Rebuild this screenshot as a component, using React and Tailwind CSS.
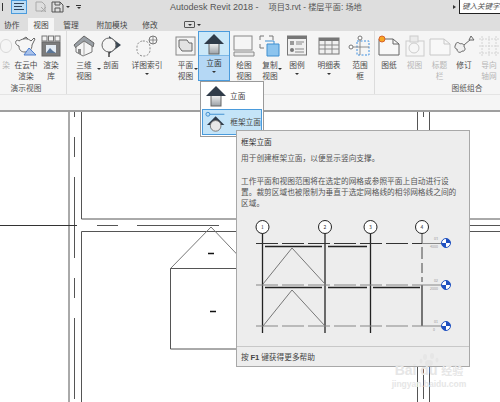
const font = { fontFamily: '"Noto Sans CJK SC", "Liberation Sans", sans-serif' };
const titleFont = { fontFamily: '"Liberation Sans", "Noto Sans CJK SC", sans-serif' };

function Teapot() {
  return (
    <svg width="24" height="22" viewBox="0 0 24 22">
      <path d="M5 6 C9 3 14 3 17 6 L20 3 L21 4 L18 10 C18 15 15 17 11 17 C7 17 5 15 5 11 C2 10 1 8 2 6 C3 5 4 5 5 6Z" fill="#f6f6f6" stroke="#666" strokeWidth="1" />
      <path d="M9 4 L12 2 L14 4" fill="none" stroke="#666" />
      <path d="M15 13 L22 20 L10 20Z" fill="#a9c2ea" stroke="#4f7fcc" />
    </svg>
  );
}

function RenderGallery() {
  return (
    <svg width="20" height="22" viewBox="0 0 20 22">
      <rect x="1" y="1" width="5" height="5" fill="#f2f2f2" stroke="#777" />
      <rect x="7.5" y="1" width="5" height="5" fill="#f2f2f2" stroke="#777" />
      <rect x="14" y="1" width="5" height="5" fill="#f2f2f2" stroke="#777" />
      <rect x="1" y="7" width="18" height="14" fill="#7c7c7c" stroke="#666" />
      <rect x="5" y="10" width="10" height="8" fill="#e4ecf4" />
      <path d="M5 18 L9 13 L12 16 L15 18Z" fill="#5a7596" />
    </svg>
  );
}

function House() {
  return (
    <svg width="22" height="22" viewBox="0 0 22 22">
      <path d="M1 10 L11 1 L21 8 L20 12 L11 6 L3 13Z" fill="#9aa0a6" stroke="#666" />
      <path d="M3 12 L11 6 L19 11 V17 L10 21 L3 17Z" fill="#f5f5f5" stroke="#777" />
      <path d="M11 7 V21" stroke="#aaa" />
      <rect x="5" y="14" width="3" height="5" fill="#888" />
    </svg>
  );
}

function Section() {
  return (
    <svg width="22" height="22" viewBox="0 0 22 22">
      <path d="M9 1 L21 10 L9 19Z" fill="#3a4652" />
      <circle cx="9" cy="10" r="7" fill="#f4f4f4" stroke="#666" />
      <path d="M9 17 V22" stroke="#444" strokeWidth="1.5" />
    </svg>
  );
}

function Callout() {
  return (
    <svg width="24" height="22" viewBox="0 0 24 22">
      <rect x="2" y="6" width="13" height="15" rx="6" fill="none" stroke="#888" strokeDasharray="2 1.5" />
      <circle cx="18" cy="5" r="4" fill="#f4f4f4" stroke="#777" />
      <path d="M14 5 H22 M18 1 V9" stroke="#777" strokeWidth="0.8" />
    </svg>
  );
}

function Plan() {
  return (
    <svg width="22" height="22" viewBox="0 0 22 22">
      <rect x="1" y="2" width="19" height="18" fill="#f4f4f4" stroke="#888" />
      <path d="M4 5 H12 L14 8 H17 V16 H7 L4 12Z" fill="#e2e2e2" stroke="#666" />
    </svg>
  );
}

function ElevationArrow({ size = 22 }) {
  return (
    <svg width={size} height={size} viewBox="0 0 22 22">
      <defs>
        <linearGradient id="elevBody" x1="0" y1="0" x2="0" y2="1">
          <stop offset="0" stopColor="#f4f4f4" />
          <stop offset="1" stopColor="#9aa0a6" />
        </linearGradient>
      </defs>
      <rect x="6" y="10" width="10" height="11" fill="url(#elevBody)" stroke="#666" />
      <path d="M11 1 L21 11 H1Z" fill="#2f3b49" />
    </svg>
  );
}

function FrameElevation() {
  return (
    <svg width="24" height="22" viewBox="0 0 24 22">
      <circle cx="3" cy="3" r="2" fill="#bfe0f5" stroke="#3f8fd0" />
      <path d="M5 3 H20" stroke="#3f8fd0" />
      <path d="M11 5 L20 14 H2Z" fill="#2f3b49" />
      <circle cx="11" cy="15" r="5.5" fill="#e8e8e8" stroke="#777" />
    </svg>
  );
}

function Sheet({ dim, dot }) {
  const c = dim ? '#c8c8c8' : '#666';
  return (
    <svg width="22" height="22" viewBox="0 0 22 22">
      <path d="M1 4 H15 L21 9 V20 H1Z" fill="#f8f8f8" stroke={c} />
      <path d="M15 4 V9 H21" fill="none" stroke={c} />
      {dot && <circle cx="4" cy="4" r="3" fill="#f5a623" stroke="#d9622b" />}
    </svg>
  );
}

function Duplicate() {
  return (
    <svg width="22" height="22" viewBox="0 0 22 22">
      <path d="M1 5 V1 H5 M10 1 H14 V5 M1 9 V13 H5" fill="none" stroke="#777" />
      <path d="M8 9 H20 V21 H8Z" fill="#8cc4ee" stroke="#3f8fd0" />
      <path d="M6 6 H15 V9" fill="none" stroke="#3f8fd0" />
    </svg>
  );
}

function Legend() {
  return (
    <svg width="20" height="22" viewBox="0 0 20 22">
      <rect x="0.5" y="1" width="19" height="19" fill="#f0f0f0" stroke="#777" />
      <rect x="0.5" y="1" width="19" height="3" fill="#777" />
      <rect x="3" y="6" width="4" height="4" fill="#999" />
      <path d="M9 7 H17 M9 9 H15 M8 14 H17 M8 17 H17" stroke="#888" />
      <circle cx="5" cy="15" r="2" fill="#777" />
    </svg>
  );
}

function Schedule() {
  return (
    <svg width="22" height="22" viewBox="0 0 22 22">
      <rect x="1" y="3" width="20" height="16" fill="#f0f0f0" stroke="#777" />
      <rect x="1" y="3" width="20" height="3" fill="#777" />
      <path d="M1 10 H21 M1 14 H21 M7 6 V19 M14 6 V19" stroke="#888" />
    </svg>
  );
}

function ScopeBox() {
  return (
    <svg width="24" height="22" viewBox="0 0 24 22">
      <rect x="9" y="6" width="12" height="14" fill="none" stroke="#3f8fe0" strokeDasharray="2 1.5" />
      <circle cx="12" cy="3" r="2" fill="#fff" stroke="#777" />
      <circle cx="3" cy="12" r="2" fill="#fff" stroke="#777" />
      <path d="M12 5 V20 M5 12 H21" stroke="#777" strokeWidth="0.8" />
    </svg>
  );
}

function Revision() {
  return (
    <svg width="22" height="22" viewBox="0 0 22 22">
      <path d="M3 9 C1 12 2 14 4 14 C4 18 8 18 9 16 C12 17 13 13 11 12 C12 9 8 8 7 9 C6 7 3 7 3 9Z" fill="#f0f0f0" stroke="#666" />
      <path d="M11 10 L18 4" stroke="#666" />
      <path d="M18 1 L21 5 H16Z" fill="#f0f0f0" stroke="#666" />
    </svg>
  );
}

function GridGuide() {
  return (
    <svg width="22" height="22" viewBox="0 0 22 22">
      <path d="M1 4 H21 M1 11 H21 M1 18 H21 M4 1 V21 M11 1 V21 M18 1 V21" stroke="#d4d4d4" strokeDasharray="2 1" />
    </svg>
  );
}

function DimView() {
  return (
    <svg width="22" height="22" viewBox="0 0 22 22">
      <rect x="2" y="6" width="18" height="15" fill="#f6f6f6" stroke="#cccccc" />
      <circle cx="10" cy="13" r="5" fill="none" stroke="#cccccc" />
      <rect x="6" y="1" width="8" height="6" fill="#ebebeb" stroke="#cccccc" />
    </svg>
  );
}

function DrawingView() {
  return (
    <svg width="22" height="22" viewBox="0 0 22 22">
      <rect x="1" y="1" width="18" height="14" fill="#f5f5f5" stroke="#888" />
      <path d="M1 17 H21 V21 H1Z" fill="#ebebeb" stroke="#888" />
    </svg>
  );
}

function Caret() {
  return <span className="block w-0 h-0 border-x-[2px] border-x-transparent border-t-[2px] border-t-[#333]" />;
}

function Tool({ icon, lines, width, dim, caret }) {
  return (
    <div className={`relative shrink-0 flex flex-col items-center pt-[3px] h-[50px] ${width}`}>
      <div className="h-[24px] flex items-center justify-center overflow-hidden">{icon}</div>
      <div className={`mt-[1px] flex flex-col items-center leading-[11px] text-[7.7px] whitespace-nowrap ${dim ? 'text-[#b5b5b5]' : 'text-[#4a4a4a]'}`}>
        {lines.map((line) => (
          <span key={line}>{line}</span>
        ))}
        {caret === 'below' && <span className="mt-[3px]"><Caret /></span>}
      </div>
      {caret === 'side' && (
        <span className="absolute right-0 top-[37px]"><Caret /></span>
      )}
    </div>
  );
}

function ElevationButton() {
  return (
    <div className="shrink-0 w-[32px] h-[50px] flex flex-col border border-[#4a9bdc]">
      <div className="h-[24px] bg-[#cbe8f8] flex items-center justify-center border-b border-[#7db8e6]">
        <ElevationArrow />
      </div>
      <div className="flex-1 bg-[#b5d8f5] flex flex-col items-center pt-[1px] leading-[11px] text-[7.7px] text-[#333]">
        <span>立面</span>
        <span className="mt-[3px]"><Caret /></span>
      </div>
    </div>
  );
}

function TopBar() {
  return (
    <div className="h-[18px] flex items-center text-[#444] relative">
      <div className="flex items-center h-[13px] self-start">
        <span className="w-[3px] h-[8px] border-r border-[#333]" />
        <div className="ml-[8px] w-[16px] h-[14px] bg-[#bcdcf4] border border-[#4a9bdc] flex flex-col justify-center gap-[2px] px-[2px]">
          <span className="h-px bg-[#30445c] w-full" />
          <span className="h-px bg-[#30445c] w-3/4" />
          <span className="h-px bg-[#30445c] w-full" />
        </div>
        <svg className="ml-[8px]" width="12" height="12" viewBox="0 0 12 12">
          <path d="M1 1 H7 L10 4 V10 H1Z M6 6 L11 11 M11 6 L6 11" fill="none" stroke="#aaa" />
        </svg>
        <svg className="ml-[4px]" width="13" height="12" viewBox="0 0 13 12">
          <path d="M1 1 H9 L12 4 V11 H1Z M4 1 V4 H9 V1 M4 11 V7 H9 V11" fill="none" stroke="#555" />
        </svg>
        <span className="ml-[2px]"><Caret /></span>
        <span className="ml-[6px] flex flex-col items-center gap-[1px]">
          <span className="w-[5px] h-px bg-[#333]" />
          <Caret />
        </span>
      </div>
      <div className="absolute left-[170px] top-[1px] flex items-center text-[9px] leading-[13px] whitespace-nowrap text-[#555]" style={titleFont}>
        <span>Autodesk Revit 2018 -</span>
        <span className="ml-[10px] text-[8.2px]">项目3.rvt - 楼层平面: 场地</span>
      </div>
      <span className="absolute left-[453px] top-[5px] w-0 h-0 border-y-[2px] border-y-transparent border-l-[3px] border-l-[#333]" />
      <div className="absolute left-[459px] -top-[2px] w-[45px] h-[16px] bg-white border border-[#222] pl-[2px] text-[7.5px] leading-[14px] italic whitespace-nowrap text-[#555]">
        键入关键字
      </div>
    </div>
  );
}

function Tabs() {
  const tabs = [
    ['协作', 'w-[28px] pl-[4px]'],
    ['视图', 'w-[26px] justify-center bg-[#f5f5f5]'],
    ['管理', 'w-[34px] justify-center'],
    ['附加模块', 'w-[48px] justify-center'],
    ['修改', 'w-[28px] justify-center'],
  ];
  return (
    <div className="h-[13px] flex text-[7.7px] leading-[13px] text-[#444]">
      {tabs.map(([label, cls]) => (
        <div key={label} className={`flex items-center whitespace-nowrap ${cls}`}>{label}</div>
      ))}
      <div className="ml-[20px] flex items-center gap-[2px]">
        <span className="w-[11px] h-[7px] border border-[#555] rounded-[1px] flex items-center justify-center"><Caret /></span>
        <Caret />
      </div>
    </div>
  );
}

function Ribbon() {
  return (
    <div className="h-[64px] flex bg-[#f5f5f5] border-b border-[#e4e4e4] overflow-hidden">
      <div className="w-[67px] shrink-0 flex flex-col border-r border-[#dcdcdc] overflow-hidden">
        <div className="flex">
          <Tool width="w-[12px]" dim icon={<div className="w-[12px] h-[14px] border border-[#d8d8d8] rounded-full" />} lines={['染']} />
          <Tool width="w-[28px]" icon={<Teapot />} lines={['在云中', '渲染']} />
          <Tool width="w-[22px]" icon={<RenderGallery />} lines={['渲染', '库']} />
        </div>
        <div className="w-[52px] mt-[1px] text-center text-[7.7px] leading-[11px] text-[#555]">演示视图</div>
      </div>
      <div className="w-[308px] shrink-0 flex border-r border-[#dcdcdc]">
        <Tool width="w-[34px]" icon={<House />} lines={['三维', '视图']} caret="side" />
        <Tool width="w-[20px]" icon={<Section />} lines={['剖面']} />
        <Tool width="w-[52px]" icon={<Callout />} lines={['详图索引']} caret="below" />
        <Tool width="w-[25px]" icon={<Plan />} lines={['平面', '视图']} caret="side" />
        <ElevationButton />
        <Tool width="w-[28px]" icon={<DrawingView />} lines={['绘图', '视图']} />
        <Tool width="w-[24px]" icon={<Duplicate />} lines={['复制', '视图']} caret="side" />
        <Tool width="w-[30px]" icon={<Legend />} lines={['图例']} caret="below" />
        <Tool width="w-[34px]" icon={<Schedule />} lines={['明细表']} caret="below" />
        <Tool width="w-[28px]" icon={<ScopeBox />} lines={['范围', '框']} />
      </div>
      <div className="flex-1 flex flex-col overflow-hidden">
        <div className="flex">
          <Tool width="w-[28px]" icon={<Sheet dot />} lines={['图纸']} />
          <Tool width="w-[23px]" dim icon={<DimView />} lines={['视图']} />
          <Tool width="w-[27px]" dim icon={<Sheet dim />} lines={['标题', '栏']} />
          <Tool width="w-[22px]" icon={<Revision />} lines={['修订']} />
          <Tool width="w-[28px]" dim icon={<GridGuide />} lines={['导向', '轴网']} />
        </div>
        <div className="pl-[60px] w-[124px] mt-[1px] text-center text-[7.7px] leading-[11px] whitespace-nowrap text-[#555]">图纸组合</div>
      </div>
    </div>
  );
}

function Canvas() {
  const c = '#555';
  return (
    <svg className="block" width="500" height="290" viewBox="0 112 500 290">
      <g stroke={c} strokeWidth="1" fill="none">
        <path d="M69 112 V402" />
        <path d="M81.5 112 V219 H500" />
        <path d="M81.5 402 V231.5 H500" />
        <path d="M74.5 112 V117 M74.5 137 V402" strokeDasharray="20 20 81 20" />
        <path d="M0 225.5 H77" stroke="#333" />
        <path d="M97 225.5 H118 M137 225.5 H219 M469 225.5 H500" />
        <path d="M417.5 112 V402 M429.5 112 V402" />
        <path d="M423.5 112 V117 M423.5 137 V402" strokeDasharray="20 20 81 20" />
        <path d="M170.5 268.5 L211 227 L250 268" stroke="#777" />
        <path d="M170.5 268.5 H240 M170.5 268.5 V349 H240" />
      </g>
      <path d="M208 253.5 H214 M210 311.5 H216" stroke="#111" strokeWidth="1.5" />
    </svg>
  );
}

function LevelMark({ y, top, bottom }) {
  return (
    <g>
      <circle cx="446" cy={y} r="4.5" fill="#fff" stroke="#1f50c0" />
      <path d={`M446 ${y} V${y - 4.5} A4.5 4.5 0 0 1 450.5 ${y}Z M446 ${y} V${y + 4.5} A4.5 4.5 0 0 1 441.5 ${y}Z`} fill="#1f50c0" />
      <text x="436" y={y - 3} fontSize="3.5" fill="#999" textAnchor="middle">{top}</text>
      <text x="434" y={y + 5} fontSize="3.5" fill="#999" textAnchor="middle">{bottom}</text>
    </g>
  );
}

function FrameDiagram() {
  const grids = [
    [262.5, '1'],
    [325, '2'],
    [370.5, '3'],
  ];
  return (
    <svg width="232" height="129" viewBox="237 218 232 129" className="block">
      {grids.map(([x, label]) => (
        <g key={label}>
          <line x1={x} y1="234" x2={x} y2="334" stroke="#222" strokeWidth="1.3" />
          <circle cx={x} cy="228" r="6.5" fill="#fff" stroke="#222" />
          <text x={x} y="230" fontSize="5" textAnchor="middle" fill="#333">{label}</text>
        </g>
      ))}
      <path d="M422 234 V244 M422 248 V260 M422 264 V274 M422 278 V283" stroke="#444" />
      <path d="M422 286 V327" stroke="#333" strokeWidth="1.3" />
      <circle cx="422" cy="228" r="6.5" fill="#fff" stroke="#222" />
      <text x="422" y="230" fontSize="5" textAnchor="middle" fill="#333">4</text>
      <path d="M256 244.5 H422" stroke="#333" strokeDasharray="22 4" />
      <path d="M256 286 H422" stroke="#888" strokeWidth="1.2" strokeDasharray="22 4" />
      <path d="M256 327 H422" stroke="#888" strokeWidth="1.2" strokeDasharray="22 4" />
      <path d="M422 244.5 H442 M422 286 H442 M422 327 H442" stroke="#888" />
      <path d="M265 247.5 H322 M328 247.5 H367 M265 288.5 H322 M328 288.5 H367 M373 288.5 H420" stroke="#222" strokeWidth="1.3" />
      <path d="M263 285 L292 249 L325 285 M263 327 L292 291 L325 327" stroke="#777" fill="none" />
      <LevelMark y={244} top="03" bottom="4000" />
      <LevelMark y={286} top="02" bottom="2000" />
      <LevelMark y={327} top="01" bottom="0" />
    </svg>
  );
}

function ElevationMenu() {
  return (
    <div className="absolute left-[200px] top-[81px] w-[64px] h-[56px] bg-white border border-[#9a9a9a] p-[1px] flex flex-col justify-between text-[7.7px] text-[#444]">
      <div className="flex items-center gap-[3px] h-[26px] pl-[3px]">
        <ElevationArrow />
        <span>立面</span>
      </div>
      <div className="flex items-center gap-[2px] h-[26px] pl-[2px] bg-[#c4e4f8] border border-[#4a9bdc]">
        <FrameElevation />
        <span className="whitespace-nowrap">框架立面</span>
      </div>
    </div>
  );
}

function Tooltip() {
  return (
    <div className="absolute left-[236px] top-[130px] w-[234px] h-[237px] bg-[#ededed] border border-[#a8a8a8] flex flex-col text-[7.7px] text-[#555]">
      <div className="pt-[5px] px-[4px] flex-1">
        <div className="leading-[11px] text-[#333]">框架立面</div>
        <div className="mt-[5px] leading-[11px] whitespace-nowrap">用于创建框架立面，以便显示竖向支撑。</div>
        <div className="mt-[12px] leading-[11px] whitespace-nowrap">
          <div>工作平面和视图范围将在选定的网格或参照平面上自动进行设</div>
          <div>置。裁剪区域也被限制为垂直于选定网格线的相邻网格线之间的</div>
          <div>区域。</div>
        </div>
      </div>
      <div className="h-[129px] shrink-0">
        <FrameDiagram />
      </div>
      <div className="h-[20px] shrink-0 border-t border-[#c8c8c8] px-[4px] leading-[19px] text-[#444] whitespace-nowrap">
        按 <span className="font-bold font-['Liberation_Sans']">F1</span> 键获得更多帮助
      </div>
    </div>
  );
}

function Watermark() {
  return (
    <div className="absolute left-[383px] top-[352px] w-[92px] flex flex-col items-center text-[#e6e6e6] pointer-events-none">
      <svg className="-mb-[3px]" width="20" height="14" viewBox="0 0 20 14" fill="#e6e6e6">
        <ellipse cx="6" cy="5" rx="2" ry="3" />
        <ellipse cx="13" cy="4" rx="2" ry="3" />
        <ellipse cx="18" cy="8" rx="1.5" ry="2.5" />
        <ellipse cx="2" cy="9" rx="1.5" ry="2.5" />
        <ellipse cx="10" cy="11" rx="4" ry="3" />
      </svg>
      <div className="text-[14px] leading-[15px] font-bold font-['Liberation_Sans'] whitespace-nowrap">
        Bai du <span className="text-[11px]" style={font}>经验</span>
      </div>
      <div className="text-[8.5px] leading-[12px] font-bold font-['Liberation_Sans'] whitespace-nowrap">jingyan.baidu.com</div>
    </div>
  );
}

export default function App() {
  return (
    <div className="relative w-[500px] h-[402px] overflow-hidden bg-white" style={font}>
      <div className="bg-[#dedede]">
        <TopBar />
        <Tabs />
      </div>
      <Ribbon />
      <div className="h-[17px] bg-[#f5f5f5] border-b-2 border-[#9f9f9f]" />
      <Canvas />
      <ElevationMenu />
      <Tooltip />
      <Watermark />
    </div>
  );
}
